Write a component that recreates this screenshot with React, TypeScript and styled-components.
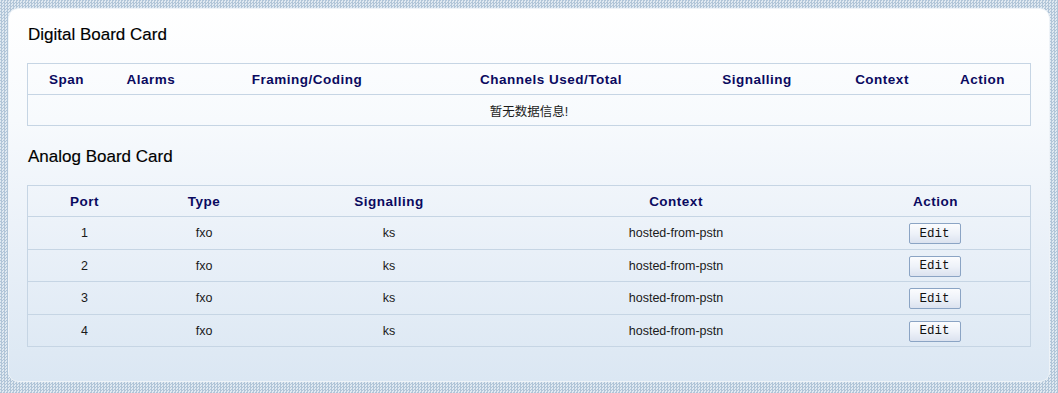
import React from "react";
import styled, { createGlobalStyle } from "styled-components";

const GlobalStyle = createGlobalStyle`
  html, body {
    margin: 0;
    padding: 0;
  }
  body {
    padding: 8px;
    height: 393px;
    box-sizing: border-box;
    overflow: hidden;
    background-color: #d4e0eb;
    background-image: repeating-conic-gradient(#b1c5d8 0 25%, #e0e9f1 0 50%);
    background-size: 3px 3px;
    font-family: "Liberation Sans", Arial, "Noto Sans CJK SC", sans-serif;
  }
`;

const Card = styled.div`
  box-sizing: border-box;
  height: 374px;
  border-radius: 10px;
  border: 1px solid #eef3f8;
  background: linear-gradient(to bottom, #ffffff 0%, #f7fafd 30%, #e9f0f8 65%, #dbe7f3 100%);
  padding: 17px 18px 0 18px;
  display: flex;
  flex-direction: column;
`;

const Title = styled.h2<{ $top: number; $bottom: number }>`
  margin: ${(p) => p.$top}px 0 ${(p) => p.$bottom}px 1px;
  font-size: 17px;
  line-height: 18px;
  font-weight: normal;
  color: #000000;
  -webkit-text-stroke: 0.15px #000;
`;

const Table = styled.div`
  border: 1px solid #c6d5e4;
`;

const Row = styled.div<{ $cols: string; $h: number; $head?: boolean }>`
  display: grid;
  grid-template-columns: ${(p) => p.$cols};
  box-sizing: border-box;
  height: ${(p) => p.$h}px;
  align-items: center;
  border-top: ${(p) => (p.$head ? "none" : "1px solid #c6d5e4")};
`;

const HeadCell = styled.div`
  text-align: center;
  font-size: 13.5px;
  font-weight: bold;
  letter-spacing: 0.5px;
  color: #0a0a60;
`;

const Cell = styled.div<{ $span?: number }>`
  text-align: center;
  font-size: 12.5px;
  color: #1a1a1a;
  grid-column: ${(p) => (p.$span ? `span ${p.$span}` : "auto")};
`;

const EditButton = styled.button`
  width: 52px;
  height: 21px;
  padding: 0;
  margin-top: 1px;
  margin-left: -2px;
  border: 1px solid #8ba4c4;
  border-radius: 2px;
  background: linear-gradient(to bottom, #fbfcfe 0%, #eef2f9 50%, #dbe2ef 100%);
  font-family: "Liberation Mono", "Courier New", monospace;
  font-size: 12.5px;
  color: #111;
  cursor: pointer;
`;

const digitalCols = "77px 92px 220px 268px 144px 106px 95px";
const analogCols = "113px 126px 244px 330px 189px";

const digitalHeads = ["Span", "Alarms", "Framing/Coding", "Channels Used/Total", "Signalling", "Context", "Action"];
const analogHeads = ["Port", "Type", "Signalling", "Context", "Action"];

const ports = [
  { port: 1, type: "fxo", sig: "ks", ctx: "hosted-from-pstn", h: 33 },
  { port: 2, type: "fxo", sig: "ks", ctx: "hosted-from-pstn", h: 32 },
  { port: 3, type: "fxo", sig: "ks", ctx: "hosted-from-pstn", h: 33 },
  { port: 4, type: "fxo", sig: "ks", ctx: "hosted-from-pstn", h: 32 },
];

export default function App() {
  return (
    <>
      <GlobalStyle />
      <Card>
        <Title $top={0} $bottom={19}>Digital Board Card</Title>
        <Table>
          <Row $cols={digitalCols} $h={30} $head>
            {digitalHeads.map((h) => (
              <HeadCell key={h}>{h}</HeadCell>
            ))}
          </Row>
          <Row $cols={digitalCols} $h={31}>
            <Cell $span={7}>暂无数据信息!</Cell>
          </Row>
        </Table>

        <Title $top={22} $bottom={19}>Analog Board Card</Title>
        <Table>
          <Row $cols={analogCols} $h={30} $head>
            {analogHeads.map((h) => (
              <HeadCell key={h}>{h}</HeadCell>
            ))}
          </Row>
          {ports.map((p) => (
            <Row key={p.port} $cols={analogCols} $h={p.h}>
              <Cell>{p.port}</Cell>
              <Cell>{p.type}</Cell>
              <Cell>{p.sig}</Cell>
              <Cell>{p.ctx}</Cell>
              <Cell>
                <EditButton type="button">Edit</EditButton>
              </Cell>
            </Row>
          ))}
        </Table>
      </Card>
    </>
  );
}
